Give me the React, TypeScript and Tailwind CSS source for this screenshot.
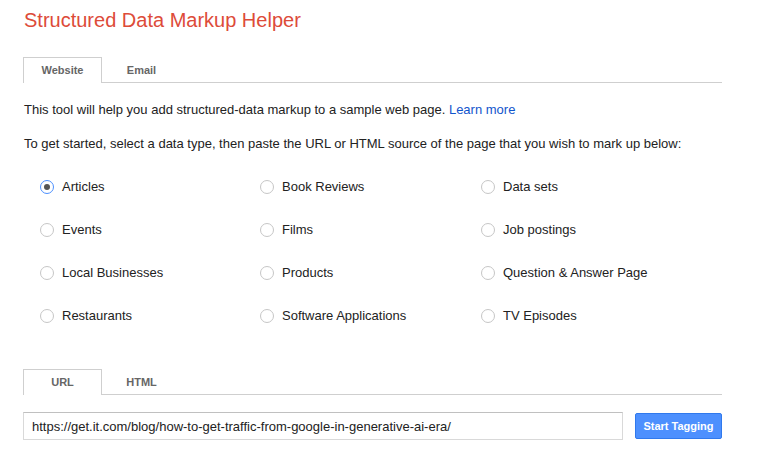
import { useState } from "react";

const dataTypes = [
  "Articles",
  "Book Reviews",
  "Data sets",
  "Events",
  "Films",
  "Job postings",
  "Local Businesses",
  "Products",
  "Question & Answer Page",
  "Restaurants",
  "Software Applications",
  "TV Episodes",
];

function Tabs({ items, active, onSelect }: { items: string[]; active: number; onSelect: (i: number) => void }) {
  return (
    <div className="flex h-[26px] w-[699px] border-b border-[#cfcfcf]">
      {items.map((label, i) => (
        <button
          key={label}
          onClick={() => onSelect(i)}
          className={`-mb-px w-[79px] h-[26px] text-[11px] font-bold text-[#666] ${
            i === active ? "border border-b-0 border-[#cfcfcf] bg-white" : "border border-transparent"
          }`}
        >
          {label}
        </button>
      ))}
    </div>
  );
}

export default function App() {
  const [mainTab, setMainTab] = useState(0);
  const [srcTab, setSrcTab] = useState(0);
  const [selected, setSelected] = useState("Articles");
  const [url, setUrl] = useState("https://get.it.com/blog/how-to-get-traffic-from-google-in-generative-ai-era/");

  return (
    <div className="min-h-[453px] bg-white pl-[23px] pt-[8px] text-[13px] text-[#222]" style={{ fontFamily: '"Liberation Sans", Arial, sans-serif' }}>
      <h1 className="pl-px text-[20px] leading-[24px] text-[#dd4b39]">Structured Data Markup Helper</h1>

      <div className="mt-[25px]">
        <Tabs items={["Website", "Email"]} active={mainTab} onSelect={setMainTab} />
      </div>

      <p className="mt-[19px] pl-px leading-[16px]">
        This tool will help you add structured-data markup to a sample web page.{" "}
        <a href="#" className="text-[#1155cc]">Learn more</a>
      </p>
      <p className="mt-[18px] pl-px leading-[16px]">
        To get started, select a data type, then paste the URL or HTML source of the page that you wish to mark up below:
      </p>

      <div className="mt-[27px] grid w-[680px] grid-cols-[220px_221px_1fr] gap-y-[27px] pl-[17px]">
        {dataTypes.map((t) => {
          const on = t === selected;
          return (
            <label key={t} className="flex h-[16px] cursor-pointer items-center gap-[8px]" onClick={() => setSelected(t)}>
              <span
                className={`flex h-[14px] w-[14px] shrink-0 items-center justify-center rounded-full border bg-white ${
                  on ? "border-[#4d90fe]" : "border-[#c6c6c6]"
                }`}
              >
                {on && <span className="h-[6px] w-[6px] rounded-full bg-[#555]" />}
              </span>
              <span className="leading-[16px]">{t}</span>
            </label>
          );
        })}
      </div>

      <div className="mt-[45px]">
        <Tabs items={["URL", "HTML"]} active={srcTab} onSelect={setSrcTab} />
      </div>

      <div className="mt-[17px] flex items-center gap-[12px]">
        <input
          value={url}
          onChange={(e) => setUrl(e.target.value)}
          className="h-[28px] w-[600px] border border-[#d9d9d9] border-t-[#c0c0c0] px-[8px] text-[13px] text-[#222] outline-none"
        />
        <button className="h-[26px] w-[87px] rounded-[2px] border border-[#3079ed] bg-[#4d90fe] text-[11px] font-bold text-white">
          Start Tagging
        </button>
      </div>
    </div>
  );
}
